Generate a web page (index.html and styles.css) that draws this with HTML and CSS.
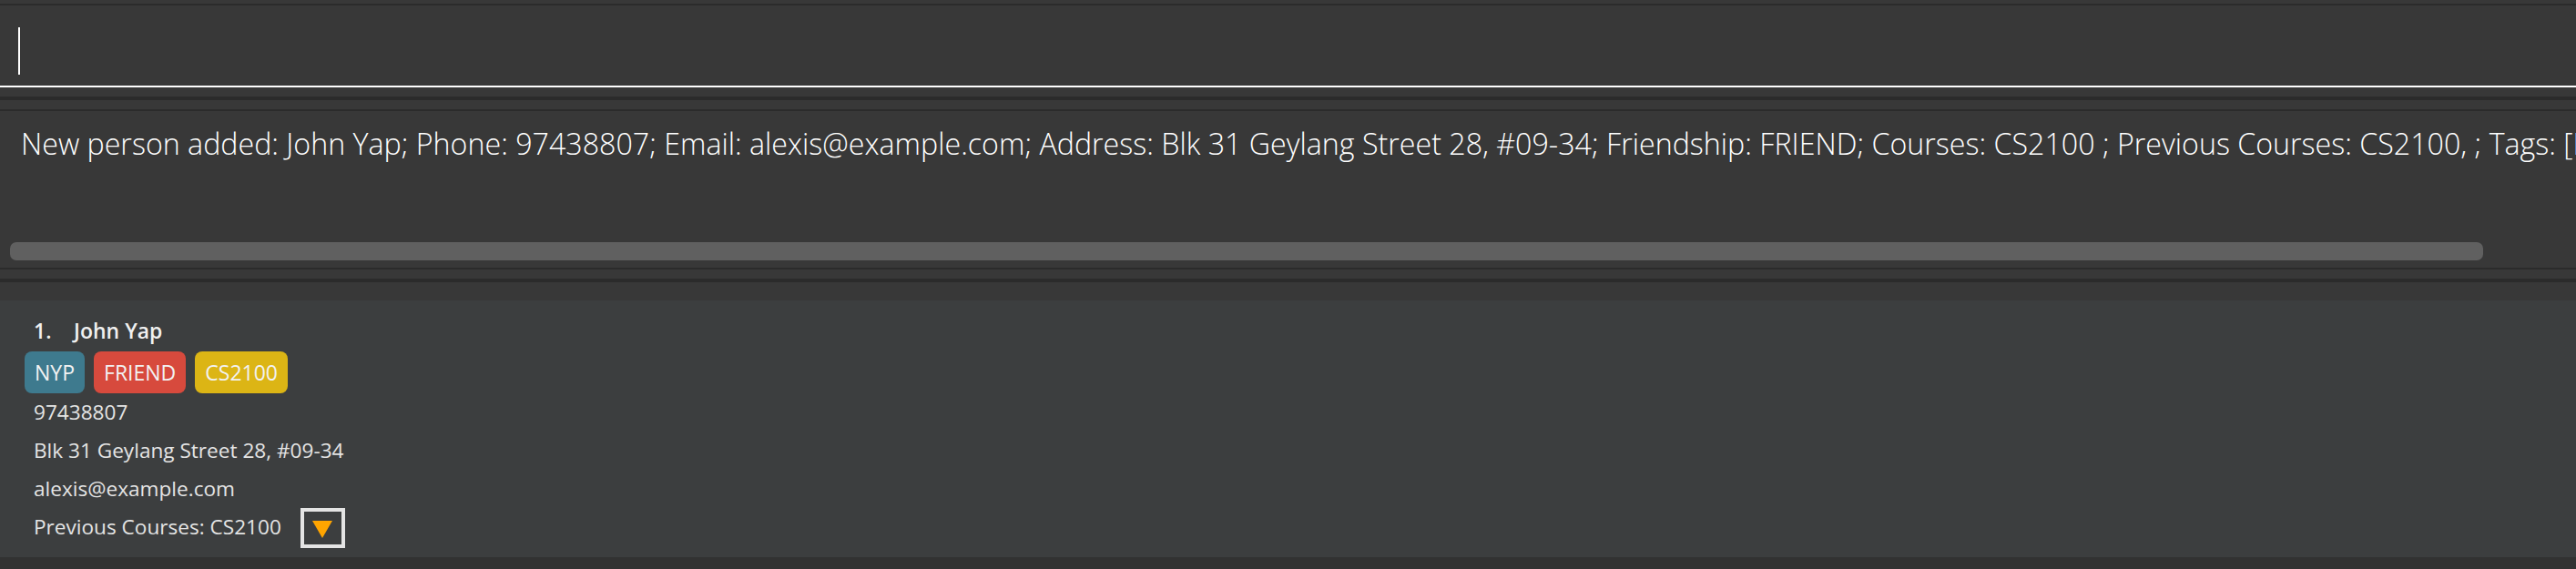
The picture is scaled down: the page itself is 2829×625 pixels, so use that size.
FILE: index.html
```html
<!DOCTYPE html>
<html>
<head>
<meta charset="utf-8">
<link rel="stylesheet" href="styles.css">
</head>
<body>
<div class="app">
  <div class="command-box">
    <span class="caret"></span>
  </div>
  <div class="divider"></div>
  <div class="result-box">
    <div class="result-text">New person added: John Yap; Phone: 97438807; Email: alexis@example.com; Address: Blk 31 Geylang Street 28, #09-34; Friendship: FRIEND; Courses: CS2100 ; Previous Courses: CS2100, ; Tags: [NYP]</div>
    <div class="scroll-track"><div class="scroll-thumb"></div></div>
  </div>
  <div class="divider lower"></div>
  <div class="list">
    <div class="card">
      <div class="name-row"><span class="index">1.</span><span class="name">John Yap</span></div>
      <div class="tags">
        <span class="tag tag-blue">NYP</span>
        <span class="tag tag-red">FRIEND</span>
        <span class="tag tag-yellow">CS2100</span>
      </div>
      <div class="detail">97438807</div>
      <div class="detail">Blk 31 Geylang Street 28, #09-34</div>
      <div class="detail">alexis@example.com</div>
      <div class="detail prev-row"><span>Previous Courses: CS2100</span><span class="dropdown"><span class="tri"></span></span></div>
    </div>
  </div>
</div>
</body>
</html>
```
FILE: styles.css
```css
html, body {
  margin: 0;
  padding: 0;
  background: #383838;
  width: 2829px;
  height: 625px;
  overflow: hidden;
}
.app {
  display: flex;
  flex-direction: column;
  height: 625px;
  padding-top: 4px;
  box-sizing: border-box;
  background: #383838;
}
.command-box {
  border-top: 2px solid #2b2b2b;
  border-bottom: 2px solid #ffffff;
  padding: 24px 0 0 20px;
  box-sizing: content-box;
  display: flex;
  align-items: flex-start;
  height: 64px;
}
.caret {
  display: block;
  width: 2px;
  height: 52px;
  background: #ffffff;
}
.divider {
  margin: 10px 0;
  height: 4px;
  background: #2b2b2b;
}
.divider.lower {
  margin-bottom: 20px;
}
.result-box {
  border-top: 2px solid #2b2b2b;
  border-bottom: 2px solid #2b2b2b;
  height: 172px;
  display: flex;
  flex-direction: column;
  overflow: hidden;
}
.result-text {
  font-family: "Open Sans", "Noto Sans", sans-serif;
  font-weight: 300;
  font-size: 32.2px;
  color: #ffffff;
  white-space: nowrap;
  padding-left: 23px;
  line-height: 42px;
  margin-top: 15px;
  height: 42px;
}
.scroll-track {
  margin-top: auto;
  margin-bottom: 8px;
  padding-left: 11px;
  padding-right: 102px;
}
.scroll-thumb {
  height: 20px;
  border-radius: 7px;
  background: #606060;
}
.list {
  flex: 1;
  background: #323232;
}
.card {
  background: #3c3e3f;
  height: 282px;
  box-sizing: border-box;
  padding: 11px 0 0 37px;
  font-family: "Open Sans", "Noto Sans", sans-serif;
  color: #e4e4e4;
}
.name-row {
  height: 44px;
  line-height: 44px;
  font-size: 23px;
  font-weight: 600;
  color: #f0f0f0;
}
.index {
  display: inline-block;
  width: 44px;
}
.tags {
  display: flex;
  gap: 10px;
  margin: 1px 0 0 -10px;
}
.tag {
  height: 46px;
  line-height: 46px;
  padding: 0 11px;
  border-radius: 8px;
  font-size: 23px;
  color: #f2f2f2;
}
.tag-blue { background: #3e7a8e; }
.tag-red { background: #d74a3d; }
.tag-yellow { background: #dcb515; }
.detail {
  font-size: 22.6px;
  height: 42px;
  line-height: 42px;
  white-space: nowrap;
}
.prev-row {
  display: flex;
  align-items: flex-start;
  height: 44px;
}
.dropdown {
  margin-left: 21px;
  width: 49px;
  height: 44px;
  box-sizing: border-box;
  border: 4px solid #e4e4e4;
  display: flex;
  align-items: center;
  justify-content: center;
}
.tri {
  width: 0;
  height: 0;
  border-left: 11px solid transparent;
  border-right: 11px solid transparent;
  border-top: 19px solid #ffa500;
  margin-top: 2px;
}
```
